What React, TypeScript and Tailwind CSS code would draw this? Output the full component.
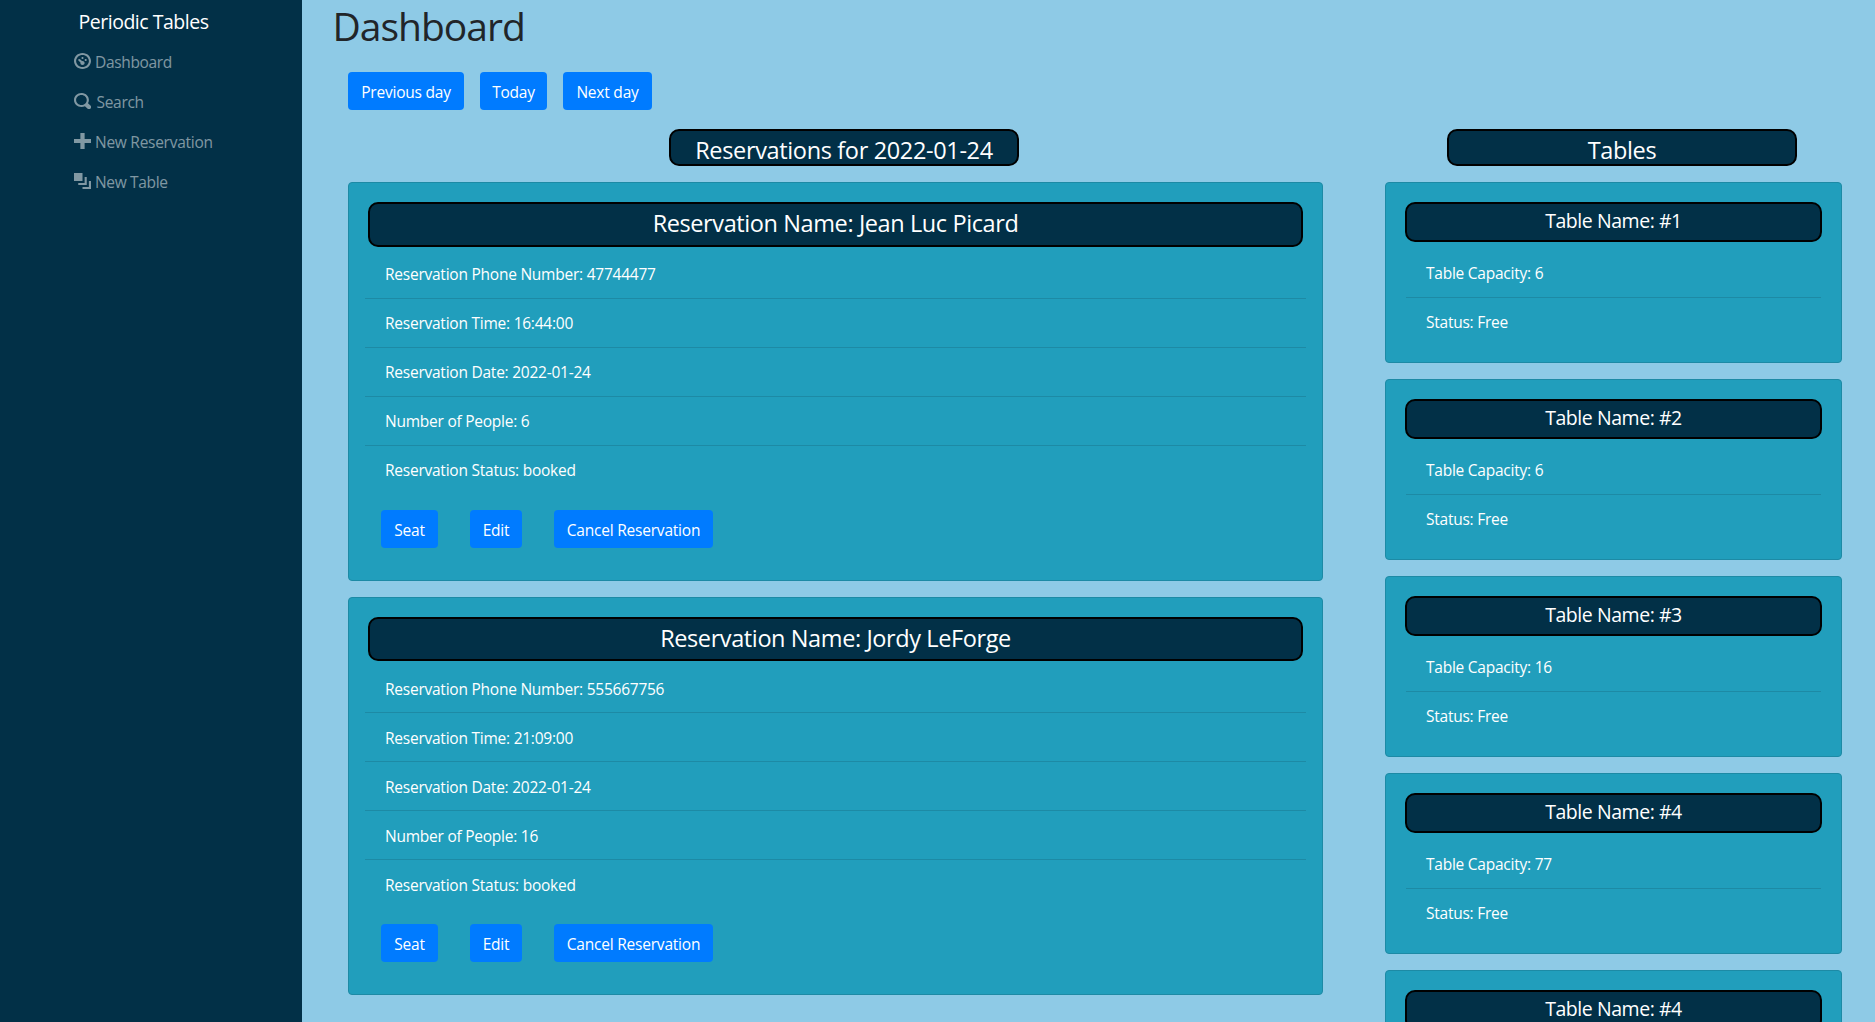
const icons = {
  dashboard:
    'M4 0c-2.2 0-4 1.8-4 4s1.8 4 4 4 4-1.8 4-4-1.8-4-4-4zm0 1c1.66 0 3 1.34 3 3s-1.34 3-3 3-3-1.34-3-3 1.34-3 3-3zm0 1c-.28 0-.5.22-.5.5s.22.5.5.5.5-.22.5-.5-.22-.5-.5-.5zm-1.66 1a.5.5 0 0 0-.19.84l.91.91c-.02.08-.06.16-.06.25 0 .55.45 1 1 1s1-.45 1-1-.45-1-1-1c-.09 0-.17.04-.25.06l-.91-.91a.5.5 0 0 0-.44-.16.5.5 0 0 0-.06 0zm3.16 0c-.28 0-.5.22-.5.5s.22.5.5.5.5-.22.5-.5-.22-.5-.5-.5z',
  search:
    'M3.5 0c-1.93 0-3.5 1.57-3.5 3.5s1.57 3.5 3.5 3.5c.59 0 1.17-.14 1.66-.41a1 1 0 0 0 .13.13l1 1a1.02 1.02 0 1 0 1.44-1.44l-1-1a1 1 0 0 0-.16-.13c.27-.49.44-1.06.44-1.66 0-1.93-1.55-3.5-3.5-3.5zm0 1c1.39 0 2.5 1.11 2.5 2.5 0 .66-.24 1.27-.66 1.72-.01.01-.02.02-.03.03a1 1 0 0 0-.13.13c-.44.4-1.04.63-1.69.63-1.39 0-2.5-1.11-2.5-2.5s1.11-2.5 2.5-2.5z',
  plus: 'M3 0v3h-3v2h3v3h2v-3h3v-2h-3v-3h-2z',
  layers: 'M0 0v4h4v-4h-4zm5 2v3h-3v1h4v-4h-1zm2 2v3h-3v1h4v-4h-1z',
};

const nav = [
  { icon: icons.dashboard, label: 'Dashboard', gap: 'ml-[4px] tracking-[-0.34px]' },
  { icon: icons.search, label: 'Search', gap: 'ml-[5.5px] tracking-[-0.3px]' },
  { icon: icons.plus, label: 'New Reservation', gap: 'ml-[4px] tracking-[-0.27px]' },
  { icon: icons.layers, label: 'New Table', gap: 'ml-[4px] tracking-[-0.34px]' },
];

const reservations = [
  { name: 'Jean Luc Picard', phone: '47744477', time: '16:44:00', date: '2022-01-24', people: 6 },
  { name: 'Jordy LeForge', phone: '555667756', time: '21:09:00', date: '2022-01-24', people: 16 },
];

const tables = [
  { name: '#1', capacity: 6 },
  { name: '#2', capacity: 6 },
  { name: '#3', capacity: 16 },
  { name: '#4', capacity: 77 },
  { name: '#4', capacity: 77 },
];

function Button({ label, width }: { label: string; width: string }) {
  return (
    <button
      className={`${width} flex h-[38px] shrink-0 items-center justify-center rounded-[4px] bg-[#007bff] pt-[2px] text-[15.5px] leading-6 tracking-[-0.21px] whitespace-nowrap text-white`}
    >
      {label}
    </button>
  );
}

function Badge({ text }: { text: string }) {
  return (
    <h4 className="flex h-[37px] w-[350px] items-center justify-center rounded-[10px] border-2 border-black bg-[#023047] pt-[4px] text-[23.5px] leading-7 tracking-[-0.35px] text-white">
      {text}
    </h4>
  );
}

function ReservationCard({ r }: { r: (typeof reservations)[number] }) {
  const rows = [
    `Reservation Phone Number: ${r.phone}`,
    `Reservation Time: ${r.time}`,
    `Reservation Date: ${r.date}`,
    `Number of People: ${r.people}`,
    `Reservation Status: booked`,
  ];
  return (
    <article className="h-[398.7px] rounded-[4px] border border-[#1d8aa5] bg-[#219ebc] px-4 pt-[19px]">
      <h4 className="mx-[3px] flex h-[44.6px] items-center justify-center rounded-[10px] border-2 border-black bg-[#023047] pb-[2px] text-[23.5px] leading-7 tracking-[-0.4px] text-white">
        Reservation Name: {r.name}
      </h4>
      <ul className="pt-[3.2px]">
        {rows.map((row) => (
          <li
            key={row}
            className="flex h-[49px] items-center border-b border-[#1d8aa5] pt-px pl-5 text-[15.5px] leading-6 tracking-[-0.24px] text-white last:border-transparent"
          >
            {row}
          </li>
        ))}
      </ul>
      <div className="flex gap-8 pt-[14.9px] pl-4">
        <Button label="Seat" width="w-[57px]" />
        <Button label="Edit" width="w-[52px]" />
        <Button label="Cancel Reservation" width="w-[159px]" />
      </div>
    </article>
  );
}

function TableCard({ t }: { t: (typeof tables)[number] }) {
  return (
    <article className="h-[181px] shrink-0 rounded-[4px] border border-[#1d8aa5] bg-[#219ebc] px-[19px] pt-[19px]">
      <h5 className="flex h-10 items-center justify-center rounded-[10px] border-2 border-black bg-[#023047] pb-[2px] text-[19.5px] leading-6 tracking-[-0.45px] text-white">
        Table Name: {t.name}
      </h5>
      <ul className="mx-px pt-[7px] text-[15.5px] leading-6 tracking-[-0.24px] text-white">
        <li className="flex h-[49px] items-center border-b border-[#1d8aa5] pl-5">Table Capacity: {t.capacity}</li>
        <li className="flex h-[48px] items-center pl-5">Status: Free</li>
      </ul>
    </article>
  );
}

export default function App() {
  return (
    <div className="flex h-[1022px] w-[1875px] overflow-hidden bg-[#8ecae6] font-['Open_Sans',sans-serif]">
      <nav className="w-[302px] shrink-0 bg-[#023047] pt-[7px]">
        <h1 className="pl-[78.5px] text-[19.5px] leading-[30px] tracking-[-0.48px] text-white">Periodic Tables</h1>
        <ul className="pt-1">
          {nav.map((item) => (
            <li key={item.label} className="flex h-10 items-center pl-[74px] text-white/50">
              <svg className="h-4 w-[17px]" viewBox="0 0 8 8" preserveAspectRatio="none" fill="currentColor">
                <path d={item.icon} />
              </svg>
              <span className={`${item.gap} pt-[2px] text-[15.5px] leading-6`}>{item.label}</span>
            </li>
          ))}
        </ul>
      </nav>
      <main className="min-w-0 flex-1">
        <h1 className="h-[72px] pl-[30.5px] text-[39px] leading-[52px] tracking-[-1px] text-[#212529]">Dashboard</h1>
        <div className="flex gap-4 pl-[46px]">
          <Button label="Previous day" width="w-[116px]" />
          <Button label="Today" width="w-[67px]" />
          <Button label="Next day" width="w-[89px]" />
        </div>
        <div className="flex gap-[62px] pt-[19px] pl-[46px]">
          <section className="w-[975px]">
            <div className="mb-4 pl-[321px]">
              <Badge text="Reservations for 2022-01-24" />
            </div>
            <div className="flex flex-col gap-4">
              {reservations.map((r) => (
                <ReservationCard key={r.name} r={r} />
              ))}
            </div>
          </section>
          <section className="w-[457px]">
            <div className="mb-4 pl-[62px]">
              <Badge text="Tables" />
            </div>
            <div className="flex flex-col gap-4">
              {tables.map((t, i) => (
                <TableCard key={i} t={t} />
              ))}
            </div>
          </section>
        </div>
      </main>
    </div>
  );
}
